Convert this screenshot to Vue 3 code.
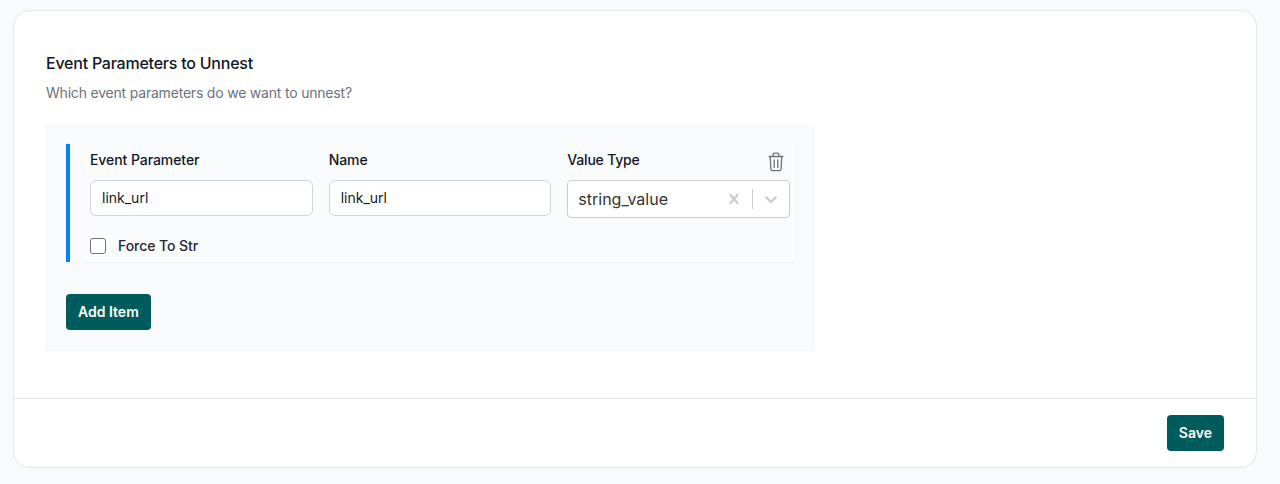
<template>
  <div class="page">
    <div class="card">
      <div class="card-body">
        <h3 class="title">Event Parameters to Unnest</h3>
        <p class="desc">Which event parameters do we want to unnest?</p>
        <div class="panel">
          <div class="item-row" v-for="item in items" :key="item.param">
            <div class="item">
              <button class="trash" aria-label="Remove">
                <svg width="18" height="20" viewBox="0 0 18 20" fill="none" stroke="#6b7280" stroke-width="1.3" stroke-linecap="round" stroke-linejoin="round">
                  <path d="M2 4.5h14" />
                  <path d="M6.2 4.2V2.6c0-.8.6-1.4 1.4-1.4h2.8c.8 0 1.4.6 1.4 1.4v1.6" />
                  <path d="M3.2 4.7l.7 12.2c.1 1 .8 1.7 1.8 1.7h6.6c1 0 1.7-.7 1.8-1.7l.7-12.2" />
                  <path d="M7.2 8v7.4M10.8 8v7.4" />
                </svg>
              </button>
              <div class="fields">
                <div class="field">
                  <label>Event Parameter</label>
                  <input class="input" type="text" :value="item.param" />
                </div>
                <div class="field">
                  <label>Name</label>
                  <input class="input" type="text" :value="item.name" />
                </div>
                <div class="field">
                  <label class="tight">Value Type</label>
                  <div class="select">
                    <span class="select-value">{{ item.type }}</span>
                    <svg class="clear" width="20" height="20" viewBox="0 0 20 20" fill="#cccccc">
                      <path d="M14.348 14.849c-0.469 0.469-1.229 0.469-1.697 0l-2.651-3.030-2.651 3.029c-0.469 0.469-1.229 0.469-1.697 0-0.469-0.469-0.469-1.229 0-1.697l2.758-3.15-2.759-3.152c-0.469-0.469-0.469-1.228 0-1.697s1.228-0.469 1.697 0l2.652 3.031 2.651-3.031c0.469-0.469 1.228-0.469 1.697 0s0.469 1.229 0 1.697l-2.758 3.152 2.758 3.15c0.469 0.469 0.469 1.229 0 1.698z" />
                    </svg>
                    <span class="sep"></span>
                    <svg class="chevron" width="20" height="20" viewBox="0 0 20 20" fill="#cccccc">
                      <path d="M4.516 7.548c0.436-0.446 1.043-0.481 1.576 0l3.908 3.747 3.908-3.747c0.533-0.481 1.141-0.446 1.574 0 0.436 0.445 0.408 1.197 0 1.615-0.406 0.418-4.695 4.502-4.695 4.502-0.217 0.223-0.502 0.335-0.787 0.335s-0.57-0.112-0.789-0.335c0 0-4.287-4.084-4.695-4.502s-0.436-1.17 0-1.615z" />
                    </svg>
                  </div>
                </div>
              </div>
              <label class="check">
                <input type="checkbox" class="checkbox" />
                <span>Force To Str</span>
              </label>
            </div>
          </div>
          <button class="btn add">Add Item</button>
        </div>
      </div>
      <div class="card-footer">
        <button class="btn">Save</button>
      </div>
    </div>
  </div>
</template>

<script setup>
import { ref } from 'vue'

const items = ref([{ param: 'link_url', name: 'link_url', type: 'string_value' }])
</script>

<style>
html,
body {
  margin: 0;
  background: #f9fafb;
}
</style>

<style scoped>
.page {
  box-sizing: border-box;
  height: 484px;
  padding: 10px 23px 16px 13px;
  background: #f9fafb;
  font-family: Inter, "Liberation Sans", sans-serif;
  color: #111827;
}

.card {
  box-sizing: border-box;
  height: 458px;
  background: #fff;
  border: 1px solid #e5e7eb;
  border-radius: 16px;
  display: flex;
  flex-direction: column;
}

.card-body {
  flex: 1;
  padding: 40px 32px 0;
}

.title {
  margin: 0;
  font-size: 16px;
  line-height: 24px;
  font-weight: 500;
  letter-spacing: -0.23px;
}

.desc {
  margin: 8px 0 21px;
  font-size: 14px;
  line-height: 20px;
  color: #6b7280;
  letter-spacing: -0.2px;
}

.panel {
  width: 770px;
  box-sizing: border-box;
  margin-left: -1px;
  padding: 20px 20px 20px 21px;
  background: #f9fafb;
  border-bottom: 1px solid #f3f4f6;
}

.item-row {
  border-left: 4px solid #0284f0;
  padding-left: 16px;
}

.item {
  position: relative;
  box-sizing: border-box;
  height: 118px;
  padding: 6px 5px 0 4px;
  background: #fafbfc;
  box-shadow: 0 1px 0 #f0f1f3, 1px 0 0 #f6f7f9;
}

.trash {
  position: absolute;
  top: 8px;
  right: 10px;
  padding: 0;
  border: 0;
  background: none;
  line-height: 0;
}

.fields {
  display: grid;
  grid-template-columns: repeat(3, 1fr);
  column-gap: 16px;
}

.field label {
  display: block;
  font-size: 14px;
  line-height: 20px;
  font-weight: 500;
  letter-spacing: -0.07px;
  margin-bottom: 10px;
}

.field label.tight {
  letter-spacing: -0.2px;
}

.input {
  display: block;
  box-sizing: border-box;
  width: 100%;
  height: 36px;
  padding: 0 11px 2px;
  border: 1px solid #d1d5db;
  border-radius: 6px;
  background: #fff;
  font-family: inherit;
  font-size: 14px;
  color: #111827;
  outline: none;
}

.select {
  box-sizing: border-box;
  height: 38px;
  display: flex;
  align-items: center;
  padding: 0 8px 0 10px;
  border: 1px solid #cccccc;
  border-radius: 4px;
  background: #fff;
}

.select-value {
  flex: 1;
  font-size: 16px;
  color: #333333;
}

.clear {
  margin-right: 8px;
}

.sep {
  width: 1px;
  height: 20px;
  background: #cccccc;
  margin-right: 8px;
}

.check {
  display: flex;
  align-items: center;
  gap: 12px;
  margin-top: 20px;
  font-size: 14px;
  line-height: 16px;
  font-weight: 500;
  letter-spacing: -0.07px;
  color: #1f2937;
}

.checkbox {
  appearance: none;
  box-sizing: border-box;
  width: 16px;
  height: 16px;
  margin: 0;
  border: 1px solid #6b7280;
  border-radius: 3px;
  background: #fff;
}

.btn {
  box-sizing: border-box;
  height: 36px;
  padding: 0 12px 2px;
  border: 0;
  border-radius: 4px;
  background: #005c5c;
  color: #fff;
  font-family: inherit;
  font-size: 14px;
  font-weight: 600;
}

.add {
  display: block;
  margin-top: 32px;
}

.card-footer {
  display: flex;
  justify-content: flex-end;
  padding: 16px 32px;
  border-top: 1px solid #e5e7eb;
}
</style>
